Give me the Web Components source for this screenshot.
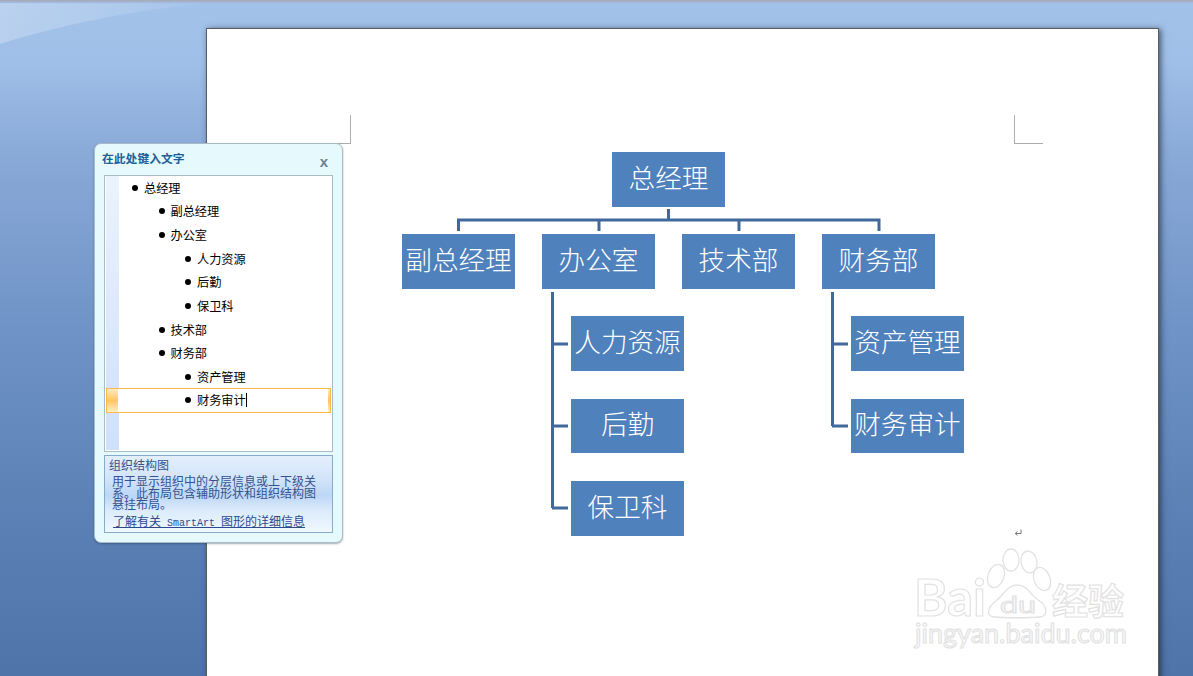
<!DOCTYPE html>
<html lang="zh">
<head>
<meta charset="utf-8">
<title>SmartArt</title>
<style>
html,body{margin:0;padding:0;height:676px;overflow:hidden;}
body{font-family:"Noto Sans CJK SC","Liberation Sans",sans-serif;}
</style>
</head>
<body>
<word-window>
    <text-pane slot="pane" title-text="在此处键入文字">
        <pane-item level="0">总经理</pane-item>
        <pane-item level="1">副总经理</pane-item>
        <pane-item level="1">办公室</pane-item>
        <pane-item level="2">人力资源</pane-item>
        <pane-item level="2">后勤</pane-item>
        <pane-item level="2">保卫科</pane-item>
        <pane-item level="1">技术部</pane-item>
        <pane-item level="1">财务部</pane-item>
        <pane-item level="2">资产管理</pane-item>
        <pane-item level="2" selected>财务审计</pane-item>
    </text-pane>
    <word-page>
        <org-chart>
            <org-node x="210" y="0">总经理</org-node>
            <org-node x="0" y="82">副总经理</org-node>
            <org-node x="140" y="82">办公室</org-node>
            <org-node x="280" y="82">技术部</org-node>
            <org-node x="420" y="82">财务部</org-node>
            <org-node x="169" y="164">人力资源</org-node>
            <org-node x="169" y="247" h="54">后勤</org-node>
            <org-node x="169" y="329">保卫科</org-node>
            <org-node x="449" y="164">资产管理</org-node>
            <org-node x="449" y="247" h="54">财务审计</org-node>
        </org-chart>
    </word-page>
    <baidu-mark slot="mark"></baidu-mark>
</word-window>

<script>
customElements.define('word-window',
    class extends HTMLElement {
        constructor() {
            super();
            this.attachShadow({mode: 'open'}).innerHTML = `
    <style>
    :host{
        display: block;
        position: relative;
        height: 676px;
        overflow: hidden;
        box-sizing: border-box;
        padding: 28px 0 0 206px;
        background: linear-gradient(to bottom, #a6a6b0 0, #a3b6d6 2px, #a2c2ea 4px, #a0bfe8 60px, #8aaad8 150px, #6f93c6 330px, #5b80b5 520px, #4e74a9 676px);
    }
    .swoosh{
        position: absolute;
        left: 0;
        top: 3px;
        width: 210px;
        height: 44px;
    }
    </style>
    <svg class="swoosh" viewBox="0 0 210 44">
        <defs><linearGradient id="fade" x1="0" x2="1" y1="0" y2="0"><stop offset="0" stop-color="#fff" stop-opacity=".26"/><stop offset="1" stop-color="#fff" stop-opacity=".04"/></linearGradient></defs>
        <path d="M0 0H205C130 8 60 22 0 41Z" fill="url(#fade)"/>
    </svg>
    <slot></slot>
    <slot name="pane"></slot>
    <slot name="mark"></slot>
`;
        }
    }
);

customElements.define('word-page',
    class extends HTMLElement {
        constructor() {
            super();
            this.attachShadow({mode: 'open'}).innerHTML = `
    <style>
    :host{
        display: block;
        position: relative;
        box-sizing: border-box;
        width: 953px;
        height: 760px;
        background: #fff;
        border: 1px solid #5c5c5c;
        border-bottom: 0;
        box-shadow: 2px 1px 6px rgba(20,30,50,.65);
        padding: 123px 0 0 195px;
    }
    .crop{
        position: absolute;
        top: 86px;
        width: 28px;
        height: 28px;
        border-bottom: 1px solid #adadad;
    }
    .crop.left{ left: 115px; border-right: 1px solid #adadad; }
    .crop.right{ left: 807px; border-left: 1px solid #adadad; }
    .para{
        position: absolute;
        left: 806px;
        top: 499px;
        width: 10px;
        height: 10px;
    }
    </style>
    <div class="crop left"></div>
    <div class="crop right"></div>
    <svg class="para" viewBox="0 0 10 10"><path d="M8 1.500V5.500H2.500M4.500 3.500L2.200 5.500L4.500 7.500" fill="none" stroke="#777" stroke-width="1"/></svg>
    <slot></slot>
`;
        }
    }
);

customElements.define('org-chart',
    class extends HTMLElement {
        constructor() {
            super();
            this.attachShadow({mode: 'open'}).innerHTML = `
    <style>
    :host{
        display: block;
        position: relative;
        width: 562px;
        height: 384px;
    }
    svg{
        position: absolute;
        left: 0;
        top: 0;
    }
    </style>
    <svg width="562" height="384" viewBox="0 0 562 384" fill="none" stroke="#41689c" stroke-width="3">
        <path d="M266.500 57V68M56.500 79V68H477V79M197 68V79M337 68V79"/>
        <path d="M150.500 140V356M150 192H166M150 274H166M150 356H166"/>
        <path d="M430.500 140V274M430 192H446M430 274H446"/>
    </svg>
    <slot></slot>
`;
        }
    }
);

customElements.define('org-node',
    class extends HTMLElement {
        constructor() {
            super();
            this.attachShadow({mode: 'open'}).innerHTML = `
    <style>
    :host{
        display: flex;
        align-items: center;
        justify-content: center;
        position: absolute;
        box-sizing: border-box;
        width: 113px;
        height: 55px;
        padding: 0 0 7px 0;
        background: #4f81bd;
        color: #fff;
        font: 300 26.600px "Noto Sans CJK SC", "Noto Sans CJK JP", sans-serif;
        white-space: nowrap;
    }
    </style>
    <slot></slot>
`;
        }
        connectedCallback(){
            this.style.left = this.getAttribute('x') + 'px';
            this.style.top = this.getAttribute('y') + 'px';
            if(this.hasAttribute('h')) this.style.height = this.getAttribute('h') + 'px';
        }
    }
);

customElements.define('text-pane',
    class extends HTMLElement {
        constructor() {
            super();
            this.attachShadow({mode: 'open'}).innerHTML = `
    <style>
    :host{
        display: flex;
        flex-direction: column;
        position: absolute;
        left: 94px;
        top: 143px;
        box-sizing: border-box;
        width: 249px;
        height: 400px;
        padding: 0 9px 9px 9px;
        background: #e6f9fc;
        border: 1px solid #a9bcc6;
        border-radius: 7px;
        box-shadow: 0 1px 2px rgba(30,50,80,.4);
        font: 12px/1 "Noto Sans CJK SC", sans-serif;
    }
    .head{
        display: flex;
        align-items: center;
        justify-content: space-between;
        height: 31px;
        flex: none;
    }
    .title{
        margin: 0 0 4px -2px;
        font-weight: 700;
        font-size: 11.800px;
        color: #1d5f99;
    }
    .close{
        margin: 4px 5px 0 0;
        font: 700 15px/1 "Liberation Sans", sans-serif;
        color: #6f7f8c;
    }
    .list{
        position: relative;
        box-sizing: border-box;
        height: 277px;
        flex: none;
        border: 1px solid #a9bcc6;
        background: #fff;
    }
    .strip{
        position: absolute;
        left: 1px;
        top: 0;
        bottom: 1px;
        width: 13px;
        background: linear-gradient(to bottom, #eaf3fd, #cfe0fb);
    }
    .items{
        position: relative;
    }
    .info{
        flex: 1;
        margin-top: 3px;
        box-sizing: border-box;
        padding: 2px 0 0 4px;
        border: 1px solid #85acc9;
        background: linear-gradient(to bottom, #e4effc 0, #d2e4f9 30%, #bdd7f6 52%, #dcebfb 72%, #eff8fe 100%);
        color: #33528f;
    }
    .info h4{
        margin: 0;
        font: 12px/13px "Noto Sans CJK SC", sans-serif;
    }
    .info p{
        margin: 4px 0 0 3px;
        font-size: 12px;
        line-height: 11.500px;
        white-space: nowrap;
    }
    .info a{
        display: block;
        width: max-content;
        margin: 4px 0 0 4px;
        color: #2c4a8c;
        line-height: 13px;
        text-decoration: underline;
        white-space: pre;
    }
    .info a span{
        font: 10px/13px "Liberation Mono", monospace;
    }
    </style>
    <div class="head">
        <span class="title"></span>
        <span class="close">x</span>
    </div>
    <div class="list">
        <div class="strip"></div>
        <div class="items"><slot></slot></div>
    </div>
    <div class="info">
        <h4>组织结构图</h4>
        <p>用于显示组织中的分层信息或上下级关<br>系。此布局包含辅助形状和组织结构图<br>悬挂布局。</p>
        <a>了解有关<span> SmartArt </span>图形的详细信息</a>
    </div>
`;
        }
        connectedCallback(){
            this.shadowRoot.querySelector('.title').textContent = this.getAttribute('title-text');
        }
    }
);

customElements.define('pane-item',
    class extends HTMLElement {
        constructor() {
            super();
            this.attachShadow({mode: 'open'}).innerHTML = `
    <style>
    :host{
        display: flex;
        align-items: center;
        position: relative;
        box-sizing: border-box;
        height: 23.670px;
        color: #000;
        font-size: 12.200px;
    }
    :host([selected]){
        margin: -1px 1px 0 1px;
        height: 25px;
        border: 1px solid #fdb94f;
        background: #fff;
    }
    :host([selected])::before,
    :host([selected])::after{
        content: "";
        position: absolute;
        top: 0;
        bottom: 0;
        background: linear-gradient(to bottom, #fdebc0, #fdc75e 50%, #fdeec8);
    }
    :host([selected])::before{ left: 0; width: 11px; }
    :host([selected])::after{ right: 0; width: 2px; }
    .dot{
        width: 6px;
        height: 6px;
        border-radius: 50%;
        background: #000;
        flex: none;
        margin-right: 6px;
    }
    .caret{
        display: none;
        width: 1px;
        height: 14px;
        background: #000;
    }
    :host([selected]) .caret{ display: block; }
    </style>
    <span class="dot"></span><slot></slot><span class="caret"></span>
`;
        }
        connectedCallback(){
            const indent = 27 + 26.500 * Number(this.getAttribute('level'));
            this.style.paddingLeft = (this.hasAttribute('selected') ? indent - 2 : indent) + 'px';
        }
    }
);

customElements.define('baidu-mark',
    class extends HTMLElement {
        constructor() {
            super();
            this.attachShadow({mode: 'open'}).innerHTML = `
    <style>
    :host{
        display: block;
        position: absolute;
        left: 910px;
        top: 545px;
        width: 225px;
        height: 110px;
    }
    svg{ display: block; }
    text{
        fill: #fff;
        stroke: #e2e2e2;
        stroke-width: 1.200;
        font-family: "Lato", "Noto Sans CJK SC", sans-serif;
    }
    .paw{
        fill: #fff;
        stroke: #e2e2e2;
        stroke-width: 1.300;
    }
    </style>
    <svg width="225" height="110" viewBox="0 0 225 110">
        <text x="4" y="71" font-size="52" font-weight="700" textLength="72" lengthAdjust="spacingAndGlyphs">Bai</text>
        <ellipse class="paw" cx="86" cy="31" rx="8" ry="12" transform="rotate(20 86 31)"/>
        <ellipse class="paw" cx="101" cy="15" rx="8" ry="11"/>
        <ellipse class="paw" cx="119" cy="17" rx="8" ry="11" transform="rotate(-12 119 17)"/>
        <ellipse class="paw" cx="132" cy="34" rx="8" ry="12" transform="rotate(-22 132 34)"/>
        <path class="paw" d="M107 40C97 40 94 50 86 56C78 62 75 71 84 72C94 73 120 73 130 72C139 71 137 60 128 55C120 50 118 40 107 40Z"/>
        <text x="90" y="68" font-size="24" textLength="36" lengthAdjust="spacingAndGlyphs">du</text>
        <text x="142" y="70" font-size="36" style="font-family:'Noto Sans CJK SC',sans-serif;font-weight:700">经验</text>
        <text x="5" y="98" font-size="27" textLength="212" lengthAdjust="spacingAndGlyphs" style="font-weight:400">jingyan.baidu.com</text>
    </svg>
`;
        }
    }
);
</script>
</body>
</html>
